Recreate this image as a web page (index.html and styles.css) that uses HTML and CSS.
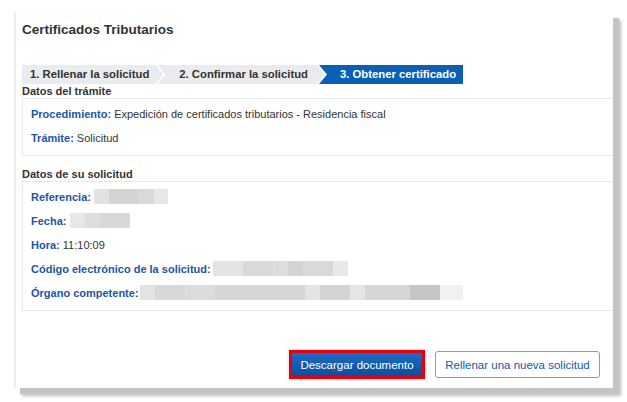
FILE: index.html
```html
<!DOCTYPE html>
<html lang="es">
  <head>
    <meta charset="UTF-8" />
    <title>Certificados Tributarios</title>
    <link rel="stylesheet" href="styles.css">
  </head>
  <body>
    <div class="card">
      <h1>Certificados Tributarios</h1>

      <div class="steps">
        <div class="step first">1. Rellenar la solicitud</div>
        <div class="step middle">2. Confirmar la solicitud</div>
        <div class="step last active">3. Obtener certificado</div>
      </div>

      <h2>Datos del trámite</h2>
      <div class="box">
        <p><span class="lbl">Procedimiento:</span> Expedición de certificados tributarios - Residencia fiscal</p>
        <p><span class="lbl">Trámite:</span> Solicitud</p>
      </div>

      <h2 class="second">Datos de su solicitud</h2>
      <div class="box">
        <p><span class="lbl">Referencia:</span> <span class="blur ref"></span></p>
        <p><span class="lbl">Fecha:</span> <span class="blur fecha"></span></p>
        <p><span class="lbl">Hora:</span> 11:10:09</p>
        <p><span class="lbl">Código electrónico de la solicitud:</span><span class="blur codigo"></span></p>
        <p><span class="lbl">Órgano competente:</span><span class="blur organo"></span></p>
      </div>

      <div class="actions">
        <button class="btn primary">Descargar documento</button>
        <button class="btn secondary">Rellenar una nueva solicitud</button>
      </div>
    </div>
  </body>
</html>
```

FILE: styles.css
```css
* {
  box-sizing: border-box;
  margin: 0;
  padding: 0;
}

html,
body {
  height: 100%;
}

body {
  font-family: "Liberation Sans", Arial, sans-serif;
  background-color: #fff;
  color: #333;
  font-size: 11px;
  padding: 12px 0 0 14px;
}

.card {
  width: 599px;
  height: 376px;
  background: #fff;
  border-left: 2px solid #ececec;
  box-shadow: 6px 6px 0 #c4c4c4, 8px 8px 3px rgba(0, 0, 0, 0.25);
  padding: 0 0 9px 6px;
  display: flex;
  flex-direction: column;
}

h1 {
  font-size: 13.5px;
  font-weight: bold;
  color: #333;
  line-height: 16px;
  margin-top: 10px;
}

.steps {
  display: flex;
  height: 19px;
  margin-top: 27px;
}

.step {
  background: #e9ebee;
  font-size: 11.3px;
  font-weight: bold;
  line-height: 19px;
  color: #333;
  white-space: nowrap;
}

.step.first {
  padding: 0 14px 0 8px;
  clip-path: polygon(0 0, calc(100% - 8px) 0, 100% 50%, calc(100% - 8px) 100%, 0 100%);
}

.step.middle {
  margin-left: -6px;
  padding: 0 17px 0 22px;
  clip-path: polygon(0 0, calc(100% - 8px) 0, 100% 50%, calc(100% - 8px) 100%, 0 100%, 8px 50%);
}

.step.last {
  margin-left: -6px;
  padding: 0 7px 0 21px;
  clip-path: polygon(0 0, 100% 0, 100% 100%, 0 100%, 8px 50%);
}

.step.active {
  background: #0b5fb5;
  color: #fff;
}

h2 {
  font-size: 11px;
  font-weight: bold;
  color: #333;
  line-height: 14px;
}

h2.second {
  margin-top: 11px;
}

.box {
  border: 1px solid #e3e9ef;
  border-right: none;
  padding: 3px 0 5px 8px;
}

.box p {
  line-height: 24px;
  height: 24px;
  white-space: nowrap;
}

.lbl {
  color: #1b56a6;
  font-weight: bold;
}

.blur {
  display: inline-block;
  height: 15px;
  vertical-align: -3px;
}

.blur.ref {
  width: 74px;
  background: linear-gradient(to right, #e2e2e2 0 15px, #d4d4d4 15px 45px, #d9d9d9 45px 60px, #e7e7e7 60px);
}

.blur.fecha {
  width: 60px;
  background: linear-gradient(to right, #e7e7e7 0 15px, #dedede 15px 30px, #d8d8d8 30px);
}

.blur.codigo {
  width: 135px;
  margin-left: 2px;
  background: linear-gradient(to right, #e4e4e4 0 30px, #d9d9d9 30px 60px, #dddddd 60px 75px, #d4d4d4 75px 90px, #d9d9d9 90px 120px, #e8e8ea 120px);
}

.blur.organo {
  width: 323px;
  margin-left: 1px;
  background: linear-gradient(to right, #e3e3e3 0 15px, #d8d8d8 15px 45px, #dcdcdc 45px 75px, #d6d6d6 75px 165px, #e4e4e2 165px 180px, #d4d4d4 180px 210px, #e5e5e3 210px 225px, #d6d6d6 225px 270px, #c6c6c6 270px 300px, #f1f1f1 300px);
}

.actions {
  margin-top: auto;
  display: flex;
  justify-content: flex-end;
  align-items: center;
  gap: 10px;
  padding-right: 13px;
}

.btn {
  font-family: "Liberation Sans", Arial, sans-serif;
  font-size: 11.5px;
  cursor: pointer;
}

.primary {
  height: 29px;
  width: 136px;
  color: #fff;
  background: linear-gradient(#1c6cc4, #0b4f9e);
  border: 3px solid #e6000f;
  box-shadow: 0 0 3px rgba(0, 0, 0, 0.25);
}

.secondary {
  height: 27px;
  width: 165px;
  color: #1258a8;
  background: #fff;
  border: 1px solid #6da2da;
  border-radius: 3px;
}
```
